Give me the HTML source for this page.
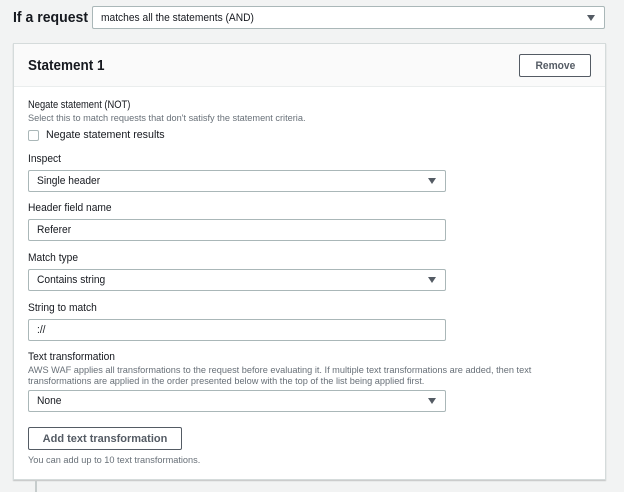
<!DOCTYPE html>
<html><head><meta charset="utf-8"><style>
*{box-sizing:border-box;margin:0;padding:0}
body{width:624px;height:492px;background:#f2f3f3;font-family:"Liberation Sans",sans-serif;color:#16191f;position:relative;overflow:hidden}
.a{position:absolute;white-space:nowrap}
.t{display:inline-block;transform:scaleX(.93);transform-origin:left center}
.box{position:absolute;background:#fff;border:1px solid #aab7b8;border-radius:2px;font-size:11px;padding-left:8px;display:flex;align-items:center}
.arr{position:absolute;right:9px;top:50%;margin-top:-3px;width:0;height:0;border-left:4.5px solid transparent;border-right:4.5px solid transparent;border-top:6px solid #545b64}
.lbl{font-size:11px;color:#16191f}
.desc{font-size:9.2px;color:#687078}
.desc .t{transform:none}
</style></head><body>
<div class="a" style="left:13px;top:10px;font-size:14.5px;font-weight:bold"><span class="t" style="transform:scaleX(.97)">If a request</span></div>
<div class="box" style="left:92px;top:6px;width:513px;height:23px;padding-left:8px"><span class="t">matches all the statements (AND)</span><div class="arr"></div></div>

<div class="a" style="left:13px;top:43px;width:593px;height:437px;background:#fff;border:1px solid #d5dbdb;box-shadow:0 1px 1px rgba(0,0,0,.2)"></div>
<div class="a" style="left:14px;top:44px;width:591px;height:43px;background:#fafafa;border-bottom:1px solid #eaeded"></div>
<div class="a" style="left:28px;top:58px;font-size:14.5px;font-weight:bold"><span class="t" style="transform:scaleX(.93)">Statement 1</span></div>
<div class="a" style="left:519px;top:54px;width:72px;height:23px;border:1px solid #545b64;background:#fff;border-radius:2px;font-size:11px;font-weight:bold;color:#545b64;display:flex;align-items:center;justify-content:center"><span class="t" style="transform-origin:center">Remove</span></div>

<div class="a lbl" style="left:28px;top:99px"><span class="t" style="transform:scaleX(.85)">Negate statement (NOT)</span></div>
<div class="a desc" style="left:28px;top:113px"><span class="t">Select this to match requests that don't satisfy the statement criteria.</span></div>
<div class="a" style="left:28px;top:130px;width:11px;height:11px;border:1px solid #aab7b8;border-radius:2px;background:#fff"></div>
<div class="a lbl" style="left:46px;top:129px"><span class="t" style="transform:scaleX(.97)">Negate statement results</span></div>

<div class="a lbl" style="left:28px;top:153px"><span class="t">Inspect</span></div>
<div class="box" style="left:28px;top:170px;width:418px;height:22px"><span class="t">Single header</span><div class="arr"></div></div>
<div class="a lbl" style="left:28px;top:202px"><span class="t">Header field name</span></div>
<div class="box" style="left:28px;top:219px;width:418px;height:22px"><span class="t">Referer</span></div>
<div class="a lbl" style="left:28px;top:252px"><span class="t">Match type</span></div>
<div class="box" style="left:28px;top:269px;width:418px;height:22px"><span class="t">Contains string</span><div class="arr"></div></div>
<div class="a lbl" style="left:28px;top:302px"><span class="t">String to match</span></div>
<div class="box" style="left:28px;top:319px;width:418px;height:22px"><span class="t">://</span></div>

<div class="a lbl" style="left:28px;top:351px"><span class="t">Text transformation</span></div>
<div class="a desc" style="left:28px;top:365px"><span class="t">AWS WAF applies all transformations to the request before evaluating it. If multiple text transformations are added, then text</span></div>
<div class="a desc" style="left:28px;top:376px"><span class="t">transformations are applied in the order presented below with the top of the list being applied first.</span></div>
<div class="box" style="left:28px;top:390px;width:418px;height:22px"><span class="t">None</span><div class="arr"></div></div>
<div class="a" style="left:28px;top:427px;width:154px;height:23px;border:1px solid #545b64;background:#fff;border-radius:2px;font-size:11px;font-weight:bold;color:#545b64;display:flex;align-items:center;justify-content:center"><span class="t" style="transform:scaleX(1);transform-origin:center">Add text transformation</span></div>
<div class="a desc" style="left:28px;top:455px"><span class="t">You can add up to 10 text transformations.</span></div>
<div class="a" style="left:35px;top:481px;width:2px;height:11px;background:#c6cccc"></div>
</body></html>
